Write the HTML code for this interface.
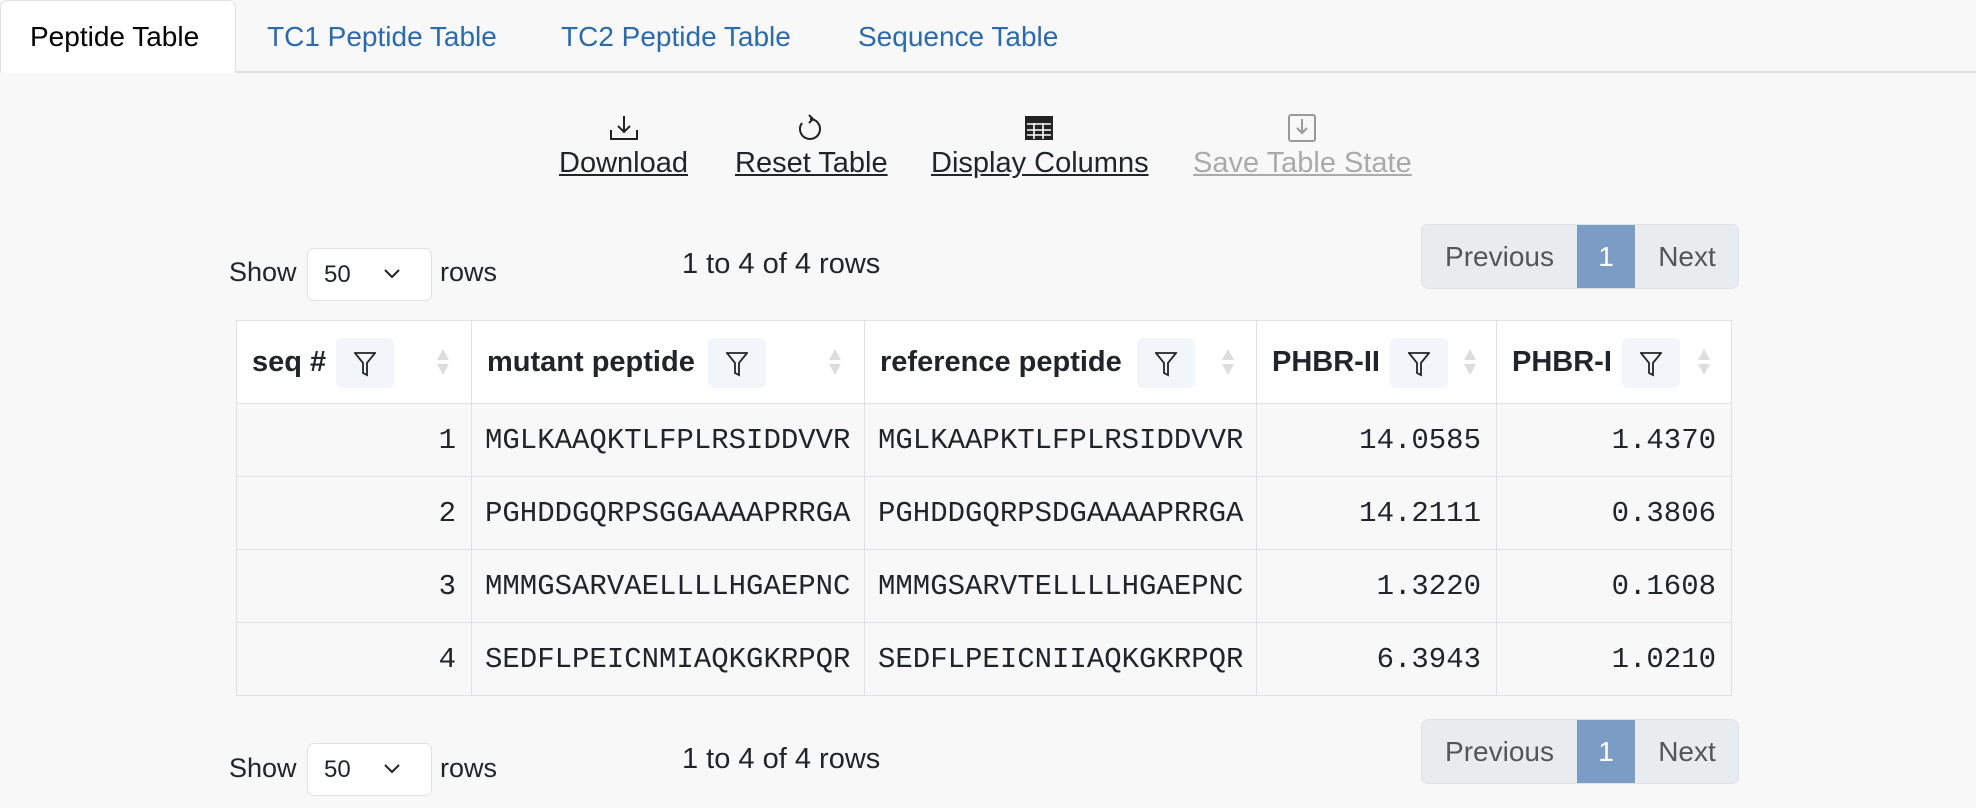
<!DOCTYPE html>
<html><head><meta charset="utf-8"><style>
*{box-sizing:border-box;margin:0;padding:0}
body{width:1976px;height:808px;background:#f8f8f8;font-family:"Liberation Sans",sans-serif;position:relative;overflow:hidden;color:#212529}
.a{position:absolute;white-space:nowrap}
.tab{position:absolute;top:0;height:72px;line-height:74px;font-size:28px;color:#2a6aad;white-space:nowrap}
.tb{font-size:29px;text-decoration:underline;text-align:center}
.sel{position:absolute;width:125px;height:53px;background:#fff;border:1px solid #dee2e6;border-radius:7px;font-size:24px;line-height:51px;padding-left:16px}
.pg{position:absolute;height:65px;width:318px;border:1px solid #dee2e6;border-radius:7px;background:#e9ecef;font-size:28px;color:#555;overflow:hidden}
.pg span{position:absolute;top:0;height:63px;line-height:63px;text-align:center}
table{position:absolute;left:236px;top:320px;border-collapse:collapse;table-layout:fixed}
td,th{border:1.5px solid #dee2e6;height:73px;font-family:"Liberation Mono",monospace;font-size:29px;text-align:right;padding:0 15px;background:#f8f8f8;white-space:nowrap;overflow:hidden}
th{height:83px;background:#fff;font-family:"Liberation Sans",sans-serif;font-weight:bold;font-size:29px;text-align:left;position:relative}
td.p{text-align:left;padding-left:13px;padding-right:0}
.f{position:absolute;top:17px;width:58px;height:50px;background:#f2f6fa;border-radius:6px}
.f svg{position:absolute;left:18px;top:13px}
.s{position:absolute;top:28px;width:12px}
.s:before{content:"";position:absolute;left:0;top:0;border:6px solid transparent;border-bottom:11px solid #ddd;border-top:0}
.s:after{content:"";position:absolute;left:0;top:15px;border:6px solid transparent;border-top:11px solid #ddd;border-bottom:0}
</style></head><body>
<div style="position:absolute;left:0;top:71px;width:1976px;height:1.5px;background:#dee2e6"></div>
<div style="position:absolute;left:0;top:0;width:236px;height:73px;background:#fff;border:1.5px solid #dee2e6;border-bottom:none;border-radius:8px 8px 0 0"></div>
<div class="tab" style="left:30px;color:#000">Peptide Table</div>
<div class="tab" style="left:267px">TC1 Peptide Table</div>
<div class="tab" style="left:561px">TC2 Peptide Table</div>
<div class="tab" style="left:858px">Sequence Table</div>

<svg class="a" style="left:609px;top:114px" width="30" height="28" viewBox="0 0 30 28" fill="none" stroke="#222" stroke-width="2"><path d="M15 2v16M9 12l6 6 6-6M2 16v9h26v-9"/></svg>
<svg class="a" style="left:797px;top:114px" width="26" height="28" viewBox="0 0 26 28" fill="none" stroke="#222" stroke-width="2"><path d="M13 5a10 10 0 1 1-8 4"/><path d="M12 1l4 4-4 4"/></svg>
<svg class="a" style="left:1024px;top:115px" width="30" height="26" viewBox="0 0 30 26" fill="none" stroke="#222" stroke-width="2"><rect x="2" y="2" width="26" height="22" fill="#222"/><path d="M3 9h24M3 15h24M3 20h24M10 8v16M19 8v16" stroke="#fff" stroke-width="1.6"/></svg>
<svg class="a" style="left:1287px;top:113px" width="30" height="30" viewBox="0 0 30 30" fill="none" stroke="#999" stroke-width="2"><rect x="2" y="2" width="26" height="26" rx="2"/><path d="M15 6v14M10 15l5 5 5-5"/></svg>
<div class="a tb" style="left:559px;top:147px">Download</div>
<div class="a tb" style="left:735px;top:147px">Reset Table</div>
<div class="a tb" style="left:931px;top:147px">Display Columns</div>
<div class="a tb" style="left:1193px;top:147px;color:#aaa">Save Table State</div>

<div class="a" style="left:229px;top:257px;font-size:27px">Show</div>
<div class="sel" style="left:307px;top:248px">50<svg style="position:absolute;left:76px;top:20px" width="16" height="10" viewBox="0 0 16 10" fill="none" stroke="#222" stroke-width="2"><path d="M1 1l7 7 7-7"/></svg></div>
<div class="a" style="left:440px;top:257px;font-size:27px">rows</div>
<div class="a" style="left:682px;top:248px;font-size:29px">1 to 4 of 4 rows</div>
<div class="pg" style="left:1421px;top:224px"><span style="left:0;width:155px">Previous</span><span style="left:155px;width:58px;background:#7b9cc4;color:#fff">1</span><span style="left:213px;width:104px">Next</span></div>

<table>
<colgroup><col style="width:235px"><col style="width:393px"><col style="width:392px"><col style="width:240px"><col style="width:235px"></colgroup>
<tr><th>seq #<div class="f" style="left:99px"><svg width="22" height="26" viewBox="0 0 22 26" fill="none" stroke="#222" stroke-width="1.8"><path d="M1 2h20l-8 10v12l-4-2V12z"/></svg></div><div class="s" style="left:200px"></div></th>
<th>mutant peptide<div class="f" style="left:236px"><svg width="22" height="26" viewBox="0 0 22 26" fill="none" stroke="#222" stroke-width="1.8"><path d="M1 2h20l-8 10v12l-4-2V12z"/></svg></div><div class="s" style="left:357px"></div></th>
<th>reference peptide<div class="f" style="left:272px"><svg width="22" height="26" viewBox="0 0 22 26" fill="none" stroke="#222" stroke-width="1.8"><path d="M1 2h20l-8 10v12l-4-2V12z"/></svg></div><div class="s" style="left:357px"></div></th>
<th>PHBR-II<div class="f" style="left:133px"><svg width="22" height="26" viewBox="0 0 22 26" fill="none" stroke="#222" stroke-width="1.8"><path d="M1 2h20l-8 10v12l-4-2V12z"/></svg></div><div class="s" style="left:207px"></div></th>
<th>PHBR-I<div class="f" style="left:125px"><svg width="22" height="26" viewBox="0 0 22 26" fill="none" stroke="#222" stroke-width="1.8"><path d="M1 2h20l-8 10v12l-4-2V12z"/></svg></div><div class="s" style="left:201px"></div></th></tr>
<tr><td>1</td><td class="p">MGLKAAQKTLFPLRSIDDVVR</td><td class="p">MGLKAAPKTLFPLRSIDDVVR</td><td>14.0585</td><td>1.4370</td></tr>
<tr><td>2</td><td class="p">PGHDDGQRPSGGAAAAPRRGA</td><td class="p">PGHDDGQRPSDGAAAAPRRGA</td><td>14.2111</td><td>0.3806</td></tr>
<tr><td>3</td><td class="p">MMMGSARVAELLLLHGAEPNC</td><td class="p">MMMGSARVTELLLLHGAEPNC</td><td>1.3220</td><td>0.1608</td></tr>
<tr><td>4</td><td class="p">SEDFLPEICNMIAQKGKRPQR</td><td class="p">SEDFLPEICNIIAQKGKRPQR</td><td>6.3943</td><td>1.0210</td></tr>
</table>

<div class="a" style="left:229px;top:753px;font-size:27px">Show</div>
<div class="sel" style="left:307px;top:743px">50<svg style="position:absolute;left:76px;top:20px" width="16" height="10" viewBox="0 0 16 10" fill="none" stroke="#222" stroke-width="2"><path d="M1 1l7 7 7-7"/></svg></div>
<div class="a" style="left:440px;top:753px;font-size:27px">rows</div>
<div class="a" style="left:682px;top:743px;font-size:29px">1 to 4 of 4 rows</div>
<div class="pg" style="left:1421px;top:719px"><span style="left:0;width:155px">Previous</span><span style="left:155px;width:58px;background:#7b9cc4;color:#fff">1</span><span style="left:213px;width:104px">Next</span></div>
</body></html>
